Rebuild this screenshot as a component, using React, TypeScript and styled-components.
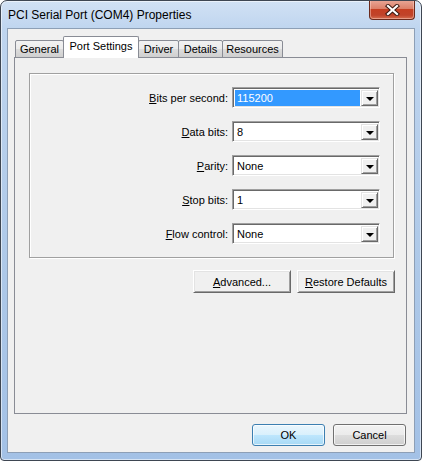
import { Fragment } from "react";
import styled, { createGlobalStyle } from "styled-components";

const GlobalStyle = createGlobalStyle`
  html, body {
    margin: 0;
    padding: 0;
    background: #ffffff;
  }
  * {
    box-sizing: border-box;
  }
`;

const uiFont = `"Liberation Sans", Arial, sans-serif`;

const Window = styled.div`
  width: 422px;
  height: 461px;
  display: flex;
  flex-direction: column;
  padding: 0 6px 7px 6px;
  border: 1px solid #3e4652;
  border-radius: 7px 7px 4px 4px;
  background: linear-gradient(180deg, #d1e1f4 0%, #bfd5ef 28px, #adc8e8 60%, #a3c1e6 100%);
  box-shadow: inset 0 0 0 1px rgba(255, 255, 255, 0.55);
  font-family: ${uiFont};
  overflow: hidden;
`;

const TitleBar = styled.div`
  height: 27px;
  flex: none;
  display: flex;
  justify-content: space-between;
  align-items: flex-start;
  padding-left: 1px;
`;

const Title = styled.span`
  padding-top: 6px;
  font-size: 12px;
  line-height: 16px;
  color: #000;
`;

const CloseButton = styled.button`
  width: 46px;
  height: 20px;
  margin-top: -1px;
  padding: 0;
  display: flex;
  align-items: center;
  justify-content: center;
  border: 1px solid #6b2a1c;
  border-top: none;
  border-radius: 0 0 4px 4px;
  background: linear-gradient(
    180deg,
    #e9a898 0%,
    #dc8069 45%,
    #c53f22 50%,
    #c0432a 80%,
    #d66f50 100%
  );
  box-shadow: inset 0 0 0 1px rgba(255, 220, 210, 0.45);
`;

const Client = styled.div`
  flex: 1;
  display: flex;
  flex-direction: column;
  padding: 7px 7px 0 6px;
  background: #f0f0f0;
  border: 1px solid #8d9fb6;
`;

const TabStrip = styled.div`
  height: 22px;
  display: flex;
  align-items: flex-end;
  padding-left: 2px;
  margin-bottom: -1px;
  position: relative;
  z-index: 1;
`;

const Tab = styled.div<{ $active?: boolean; $w: number }>`
  width: ${(p) => p.$w}px;
  height: ${(p) => (p.$active ? 22 : 18)}px;
  margin-left: -1px;
  display: flex;
  align-items: center;
  justify-content: center;
  padding-bottom: ${(p) => (p.$active ? 3 : 0)}px;
  font-size: 11px;
  color: #000;
  border: 1px solid #898c95;
  border-bottom: ${(p) => (p.$active ? "none" : "1px solid #898c95")};
  border-radius: 2px 2px 0 0;
  background: ${(p) =>
    p.$active ? "#ffffff" : "linear-gradient(180deg, #f2f2f2 0%, #ebebeb 50%, #dddddd 51%, #cfcfcf 100%)"};
  position: relative;
  z-index: ${(p) => (p.$active ? 2 : 0)};
`;

const TabPanel = styled.div`
  height: 357px;
  display: flex;
  flex-direction: column;
  padding: 15px 12px 0 14px;
  border: 1px solid #898c95;
  background: #f0f0f0;
`;

const GroupBox = styled.div`
  display: grid;
  grid-template-columns: 1fr 148px;
  column-gap: 4px;
  row-gap: 13px;
  align-items: center;
  padding: 13px 13px 13px 0;
  border: 1px solid #a0a0a0;
  box-shadow: inset 1px 1px 0 #ffffff, 1px 1px 0 #ffffff;
`;

const Label = styled.label`
  text-align: right;
  font-size: 11px;
  color: #000;
`;

const Key = styled.span`
  text-decoration: underline;
`;

const Combo = styled.div`
  height: 21px;
  display: flex;
  align-items: stretch;
  background: #ffffff;
  border: 1px solid;
  border-color: #a0a0a0 #ffffff #ffffff #a0a0a0;
  box-shadow: inset 1px 1px 0 #696969, inset -1px -1px 0 #e3e3e3;
  padding: 2px 1px 1px 2px;
`;

const ComboValue = styled.div<{ $selected?: boolean }>`
  flex: 1;
  margin-right: 1px;
  display: flex;
  align-items: center;
  padding-left: 2px;
  font-size: 11px;
  color: ${(p) => (p.$selected ? "#ffffff" : "#000000")};
  background: ${(p) => (p.$selected ? "#3399ff" : "transparent")};
`;

const DropButton = styled.div`
  width: 17px;
  display: flex;
  align-items: center;
  justify-content: center;
  background: #f0f0f0;
  border: 1px solid;
  border-color: #e3e3e3 #696969 #696969 #e3e3e3;
  box-shadow: inset 1px 1px 0 #ffffff, inset -1px -1px 0 #a0a0a0;
`;

const Arrow = styled.span`
  width: 0;
  height: 0;
  border-left: 4px solid transparent;
  border-right: 4px solid transparent;
  border-top: 4px solid #000;
  margin-top: 1px;
`;

const ButtonRow = styled.div<{ $gap: number }>`
  display: flex;
  justify-content: flex-end;
  gap: ${(p) => p.$gap}px;
`;

const PanelButtons = styled(ButtonRow)`
  margin-top: 12px;
  margin-right: -1px;
`;

const ClassicButton = styled.button`
  width: 98px;
  height: 23px;
  padding: 0;
  font-family: ${uiFont};
  font-size: 11px;
  color: #000;
  background: #f0f0f0;
  border: 1px solid;
  border-color: #ffffff #696969 #696969 #ffffff;
  box-shadow: inset 1px 1px 0 #e3e3e3, inset -1px -1px 0 #a0a0a0;
`;

const DialogButtons = styled(ButtonRow)`
  margin-top: 10px;
  margin-right: 1px;
`;

const AeroButton = styled.button<{ $default?: boolean }>`
  width: 73px;
  height: 22px;
  padding: 0;
  font-family: ${uiFont};
  font-size: 11px;
  color: #000;
  border-radius: 3px;
  border: 1px solid ${(p) => (p.$default ? "#3c7fb1" : "#707070")};
  background: ${(p) =>
    p.$default
      ? "linear-gradient(180deg, #eaf6fd 0%, #d9f0fc 50%, #bee6fd 51%, #a7d9f5 100%)"
      : "linear-gradient(180deg, #f2f2f2 0%, #ebebeb 50%, #dddddd 51%, #cfcfcf 100%)"};
  box-shadow: inset 0 0 0 1px rgba(255, 255, 255, 0.7);
`;

type Row = { key: string; rest: string; value: string; selected?: boolean };

const rows: Row[] = [
  { key: "B", rest: "its per second:", value: "115200", selected: true },
  { key: "D", rest: "ata bits:", value: "8" },
  { key: "P", rest: "arity:", value: "None" },
  { key: "S", rest: "top bits:", value: "1" },
  { key: "F", rest: "low control:", value: "None" },
];

const tabs = [
  { name: "General", w: 49 },
  { name: "Port Settings", w: 76, active: true },
  { name: "Driver", w: 41 },
  { name: "Details", w: 45 },
  { name: "Resources", w: 61 },
];

function CloseGlyph() {
  return (
    <svg width="15" height="12" viewBox="0 0 15 12">
      <path d="M3 2 L12 10 M12 2 L3 10" stroke="#3d1a12" strokeWidth="4.2" strokeLinecap="square" fill="none" />
      <path d="M3 2 L12 10 M12 2 L3 10" stroke="#ffffff" strokeWidth="2.2" strokeLinecap="square" fill="none" />
    </svg>
  );
}

export default function App() {
  return (
    <>
      <GlobalStyle />
      <Window>
        <TitleBar>
          <Title>PCI Serial Port (COM4) Properties</Title>
          <CloseButton aria-label="Close">
            <CloseGlyph />
          </CloseButton>
        </TitleBar>
        <Client>
          <TabStrip>
            {tabs.map((t) => (
              <Tab key={t.name} $active={t.active} $w={t.w}>
                {t.name}
              </Tab>
            ))}
          </TabStrip>
          <TabPanel>
            <GroupBox>
              {rows.map((r) => (
                <Fragment key={r.key}>
                  <Label>
                    <Key>{r.key}</Key>
                    {r.rest}
                  </Label>
                  <Combo>
                    <ComboValue $selected={r.selected}>{r.value}</ComboValue>
                    <DropButton>
                      <Arrow />
                    </DropButton>
                  </Combo>
                </Fragment>
              ))}
            </GroupBox>
            <PanelButtons $gap={6}>
              <ClassicButton>
                <Key>A</Key>dvanced...
              </ClassicButton>
              <ClassicButton>
                <Key>R</Key>estore Defaults
              </ClassicButton>
            </PanelButtons>
          </TabPanel>
          <DialogButtons $gap={8}>
            <AeroButton $default>OK</AeroButton>
            <AeroButton>Cancel</AeroButton>
          </DialogButtons>
        </Client>
      </Window>
    </>
  );
}
